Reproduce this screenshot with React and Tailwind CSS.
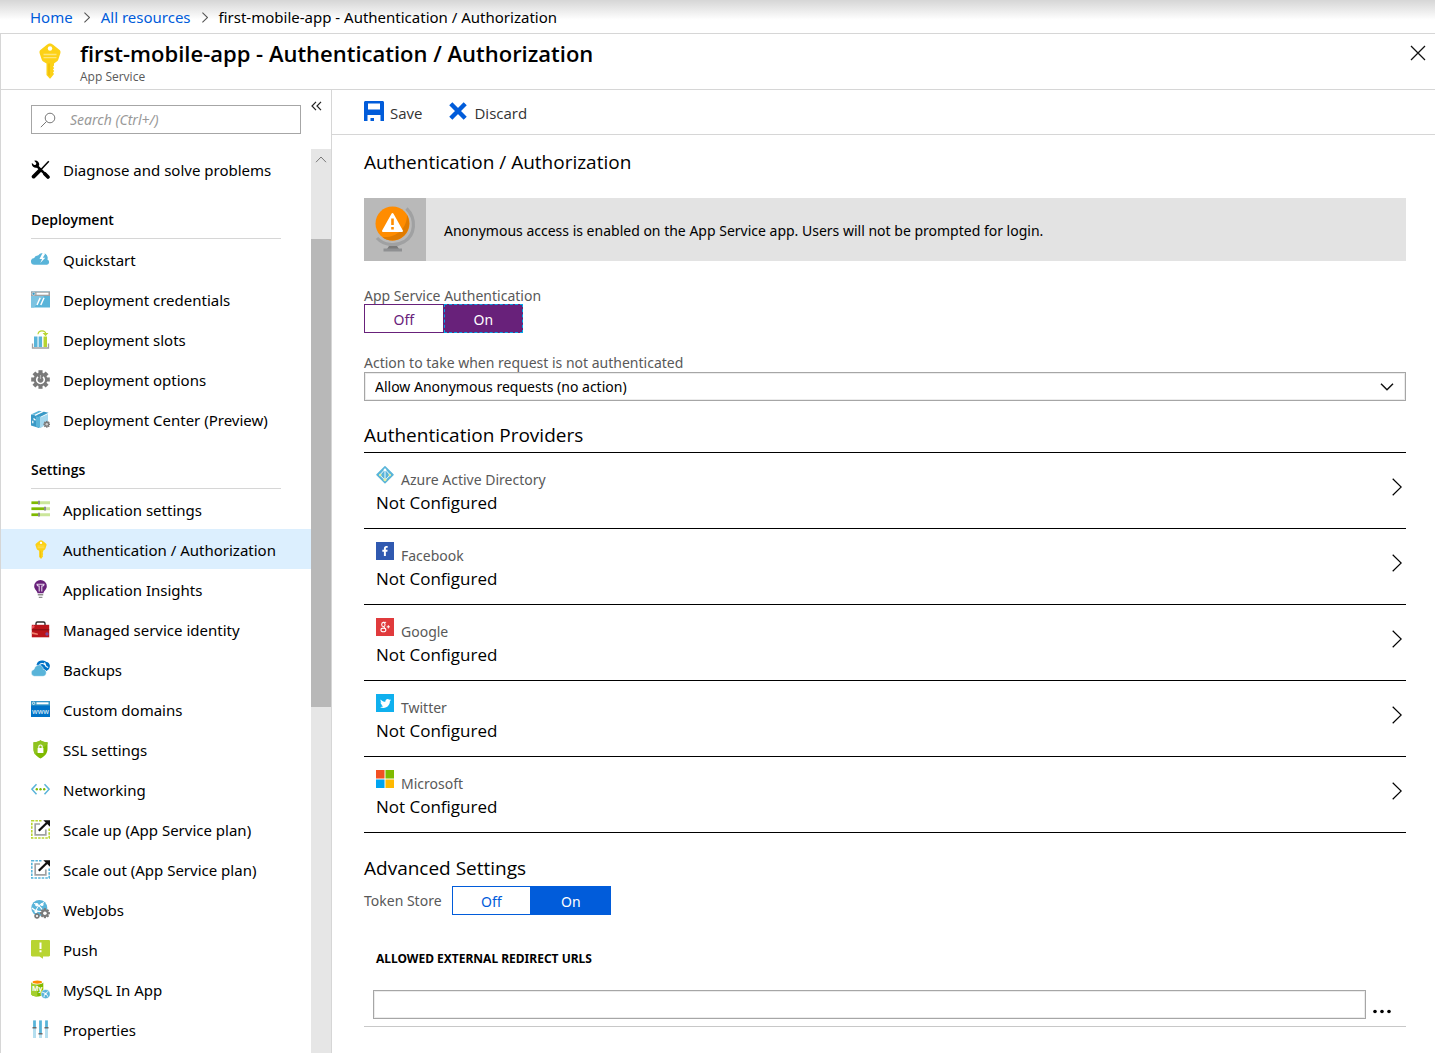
import React, { useState } from 'react';
import { FaFacebookF, FaTwitter } from 'react-icons/fa';

function Icon({ children, className = 'h-[19px] w-[19px]' }) {
  return (
    <svg viewBox="0 0 19 19" fill="none" aria-hidden="true" className={`shrink-0 ${className}`}>
      {children}
    </svg>
  );
}

// 8-tooth gear centred on cx, cy
function Gear({ cx, cy, r, fill, hole = '#fff' }) {
  return (
    <g transform={`translate(${cx} ${cy}) scale(${r / 10})`}>
      {[0, 45, 90, 135].map((a) => (
        <rect key={a} x="-2.2" y="-10" width="4.4" height="20" fill={fill} transform={`rotate(${a})`} />
      ))}
      <circle r="7.4" fill={fill} />
      <circle r="3.6" fill={hole} />
    </g>
  );
}

function KeyIcon({ className }) {
  return (
    <svg viewBox="0 0 22 36" fill="none" aria-hidden="true" className={className}>
      <path d="M11 .5c1.200 0 1.900.4 2.800 1.100l6.500 5.200c1.300 1.100 1.500 2.100 1 3.700l-1.900 5.700c-.5 1.500-1.200 2-2.400 2.800L15 20.500v2l-1 1.200 1.200 1.300-1.200 1.500 1.200 1.500-1.200 1.500 1 1.500-3.200 4c-.5.700-1.100.7-1.600 0L7.500 32V20.500L5 19c-1.200-.8-1.900-1.300-2.400-2.800L.7 10.500c-.5-1.600-.3-2.600 1-3.700l6.500-5.200C9.100.9 9.800.5 11 .5z" fill="#fcd116" />
      <circle cx="11" cy="5.500" r="2.200" fill="#fff" />
      <path d="M4.500 11.500h13M4.500 14.700h13" stroke="#fde67a" strokeWidth="1.300" />
      <path d="M10 20.500v12" stroke="#e8b400" strokeWidth="1" />
    </svg>
  );
}

function ToolsIcon() {
  return (
    <Icon>
      <path d="M4.800 4.800l9.900 9.900" stroke="#000" strokeWidth="2.600" />
      <path d="M14 14l3 3" stroke="#000" strokeWidth="3.600" strokeLinecap="round" />
      <path d="M3.200.8A3.800 3.800 0 0 1 8 5.600L5.900 7.700A4 4 0 0 1 .9 3.100l2.300 2 1.800-.3.3-1.800z" fill="#000" />
      <path d="M17.800 1.200l-7.500 8" stroke="#000" strokeWidth="1.500" />
      <path d="M8.600 10.600l-6 6" stroke="#000" strokeWidth="3.800" strokeLinecap="round" />
    </Icon>
  );
}

function CloudBoltIcon() {
  return (
    <Icon>
      <path d="M3.500 14.800a3.300 3.300 0 0 1-.3-6.800 3.600 3.600 0 0 1 3.900-2.500A5.200 5.200 0 0 1 16.600 7c.2 1 .1 1.800-.2 2.500a2.800 2.800 0 0 1-.4 5.300z" fill="#59b4d9" />
      <path d="M11.800 2.500L8.500 9h2.600L9.300 13l5-5.200h-2.500l2.400-4z" fill="#fff" />
    </Icon>
  );
}

function CredentialsIcon() {
  return (
    <Icon>
      <path d="M0 1.500h19v16H0z" fill="#59b4d9" />
      <path d="M0 6h13L3 17.500H0z" fill="#7cc3e1" />
      <path d="M0 1.500h19V6H0z" fill="#a0a1a2" />
      <path d="M5.500 2.700h12v2h-12z" fill="#fff" />
      <circle cx="2.600" cy="3.800" r="1.500" fill="#3999c6" stroke="#fff" strokeWidth=".5" />
      <path d="M9.200 7.800L6 15M13 7.800L9.800 15" stroke="#fff" strokeWidth="1.500" />
    </Icon>
  );
}

function SlotsIcon() {
  return (
    <Icon>
      <path d="M1.500 13.500v4.500h16v-4.500" stroke="#a0a1a2" strokeWidth="1.300" />
      <path d="M3 6.500h3.500V17H3zM7.600 6.500h3.500V17H7.600z" fill="#59b4d9" />
      <path d="M12.500 6.500H16V17h-3.500z" fill="#b8d432" />
      <path d="M7 4.200C7.300 1.800 9 .9 11 .9s3.600 1 3.800 3" stroke="#b8d432" strokeWidth="1.200" />
      <path d="M11.600 3h5.800l-2.800 3.200z" fill="#b8d432" />
    </Icon>
  );
}

function OptionsIcon() {
  return (
    <Icon>
      <Gear cx={9.5} cy={9.5} r={9.3} fill="#7a7a7a" hole="#7a7a7a" />
      <path d="M7 6.800a3.800 3.800 0 1 0 5 0" stroke="#fff" strokeWidth="1.600" />
      <path d="M9.500 5v4" stroke="#b5b5b5" strokeWidth="1.200" />
    </Icon>
  );
}

function CenterIcon() {
  return (
    <Icon>
      <path d="M0 4.500L8 6v12l-8-2.500z" fill="#3999c6" />
      <path d="M0 4.500L8 .8l3 .7L4.500 5z" fill="#59b4d9" />
      <path d="M4.500 5.200L12 1.500l5.500 1.300L9 7z" fill="#3999c6" />
      <path d="M5 6.500l4.500.5v11L5 16.500z" fill="#59b4d9" />
      <path d="M9.500 7.500l7.500-3.500v9.500l-7.500 4.500z" fill="#a4d8ef" />
      <path d="M4 5.200L12.500 1.200M2.500 8.500l2 1.800M1.800 10.800v2.500" stroke="#fff" strokeWidth="1.200" />
      <Gear cx={15.8} cy={14.3} r={3.4} fill="#7a7a7a" hole="#d0d0d0" />
    </Icon>
  );
}

function SlidersIcon() {
  return (
    <Icon>
      <path d="M.5 2.700h18.500M.5 8.700h18.500M.5 14.700h18.500" stroke="#cbe69a" strokeWidth="3" />
      <path d="M.5 2.700h6.500M.5 8.700h12.500M.5 14.700h6.500" stroke="#7fba00" strokeWidth="2.400" />
      <path d="M8 .8v3.800M14 6.800v3.800M8 12.800v3.800" stroke="#8d8d8d" strokeWidth="2" />
    </Icon>
  );
}

function InsightsIcon() {
  return (
    <Icon>
      <path d="M9.500 0a6.300 6.300 0 0 1 6.300 6.200c0 3.300-3 4.300-3.300 7h-6c-.3-2.700-3.300-3.700-3.300-7A6.300 6.300 0 0 1 9.500 0z" fill="#68217a" />
      <path d="M8.200 11.500V5.500M10.800 11.500V5.500M5.500 4.200h8M6 4.200c0 1.300.8 1.800 2.200 1.800M13 4.200c0 1.300-.8 1.800-2.200 1.800" stroke="#e6d6ec" strokeWidth="1.100" />
      <path d="M6.800 14.700h5.400M7.800 17.400h3.600" stroke="#8d8d8d" strokeWidth="1.400" />
    </Icon>
  );
}

function ToolboxIcon() {
  return (
    <Icon>
      <path d="M5 5V3.500C5 2.500 5.600 2 6.500 2h6c.9 0 1.500.5 1.500 1.500V5" stroke="#2b2b2b" strokeWidth="1.400" />
      <path d="M.8 4.800h17.400v12.500H.8z" fill="#ba141a" />
      <path d="M.8 9.300h17.400v1H.8z" fill="#7f0e13" />
      <path d="M.8 12l6 1.500V15l-6-1z" fill="#f0816d" />
      <path d="M.8 6l2-1 1 2-3 2z" fill="#e8525a" />
      <circle cx="16" cy="14" r="1.700" fill="#804998" />
    </Icon>
  );
}

function BackupsIcon() {
  return (
    <Icon>
      <path d="M5.500 5A5.500 5.500 0 0 1 12 .5a6 6 0 0 1 3.500 1.600c1.800.2 3 1.500 3.300 3.200.2 1.500-.3 3-1.300 4.200l-2 1.500-4-2z" fill="#0072c6" />
      <path d="M8.500 4.600c2.500-2 5.500-1 6.500 1.800l2.200 1.200M13.500 2.500l1.500 3.900" stroke="#fff" strokeWidth="1.100" />
      <path d="M3.400 16.300a3.500 3.500 0 0 1-.4-6.900C3.800 6.300 6 4.800 8.500 5.200c2.300.4 3.700 2 3.900 4.200.9-.3 2.900.9 2.900 3.400 0 2-1.500 3.500-3.300 3.500z" fill="#59b4d9" stroke="#fff" strokeWidth=".5" />
    </Icon>
  );
}

function DomainsIcon() {
  return (
    <Icon>
      <path d="M0 1.200h19v15.800H0z" fill="#0072c6" />
      <path d="M0 1.200h19v4.300H0z" fill="#3999c6" />
      <path d="M5.500 2.300h12v2h-12z" fill="#fff" />
      <circle cx="2.600" cy="3.300" r="1.200" stroke="#fff" strokeWidth=".7" />
      <text x="9.500" y="13.500" textAnchor="middle" fontSize="7" fontFamily="Open Sans, sans-serif" fontWeight="600" fill="#cfe5f5">www</text>
    </Icon>
  );
}

function SslIcon() {
  return (
    <Icon>
      <path d="M9.500.3c2 1.500 4.500 2 7 2V9c0 4.500-3 7.500-7 9.500-4-2-7-5-7-9.500V2.300c2.500 0 5-.5 7-2z" fill="#7fba00" />
      <path d="M9.500.3c2 1.500 4.500 2 7 2V4L4 14.500C3 13 2.500 11 2.500 9V2.300c2.500 0 5-.5 7-2z" fill="#8fc31f" />
      <path d="M6.600 8h5.800v5H6.600z" fill="#fff" />
      <path d="M7.800 8V6.700a1.700 1.700 0 0 1 3.400 0V8" stroke="#fff" strokeWidth="1.100" />
    </Icon>
  );
}

function NetworkIcon() {
  return (
    <Icon>
      <path d="M5.500 4.200L.9 9.200l4.600 5M13.500 4.200l4.600 5-4.600 5" stroke="#59b4d9" strokeWidth="1.500" />
      <circle cx="5.800" cy="9.200" r="1.200" fill="#7fba00" />
      <circle cx="9.500" cy="9.200" r="1.200" fill="#7fba00" />
      <circle cx="13.200" cy="9.200" r="1.200" fill="#7fba00" />
    </Icon>
  );
}

function ScaleIcon({ color }) {
  return (
    <Icon>
      <path d="M.8.800h17.400v17.200H.8z" stroke={color} strokeWidth="1.600" strokeDasharray="2.500 1.100" />
      <path d="M11 0h8v8h-8z" fill="#fff" />
      <path d="M9 4H4.200v10.800h10.600V9.500" stroke="#a0a1a2" strokeWidth="1.700" />
      <path d="M7.800 10.800l8.500-8.300" stroke="#111" strokeWidth="2.300" />
      <path d="M12.300.2H19v6.500z" fill="#111" />
    </Icon>
  );
}

function WebJobsIcon() {
  return (
    <Icon>
      <circle cx="8.300" cy="8" r="8" fill="#59b4d9" />
      <path d="M3 3.500c3 0 7 3 9 8M13 2.500C9 4 5 8 4.500 13M1 8c3 3 7 4 11 3.500" stroke="#fff" strokeWidth="1.200" />
      <circle cx="5.800" cy="4.800" r="1.700" fill="#fff" />
      <circle cx="11" cy="4.500" r="1.500" fill="#fff" />
      <circle cx="5" cy="11.500" r="1.500" fill="#fff" />
      <Gear cx={13.9} cy={13.2} r={5} fill="#7a7a7a" />
      <Gear cx={6} cy={16} r={3} fill="#7a7a7a" />
    </Icon>
  );
}

function PushIcon() {
  return (
    <Icon>
      <path d="M1.200 0h16.600c.7 0 1.200.5 1.200 1.200v14c0 .7-.5 1.200-1.200 1.200H12V18.800l-3.500-2.400H1.200C.5 16.400 0 15.900 0 15.200v-14C0 .5.5 0 1.200 0z" fill="#b8d432" />
      <path d="M9.500 2.500v6.500M9.500 10.300v2" stroke="#fff" strokeWidth="2" />
    </Icon>
  );
}

function MySqlIcon() {
  return (
    <Icon>
      <path d="M.3 2.500h12v11.700c0 1.200-2.700 2.200-6 2.200s-6-1-6-2.200z" fill="#7fba00" />
      <path d="M.3 2.500h6v13.900c-3.300 0-6-1-6-2.200z" fill="#a4cf2d" />
      <ellipse cx="6.300" cy="2.300" rx="6" ry="2.200" fill="#fff" />
      <ellipse cx="6.300" cy="2.100" rx="4.800" ry="1.600" fill="#ff8c00" />
      <text x="6.200" y="11" textAnchor="middle" fontSize="7" fontFamily="Open Sans, sans-serif" fontWeight="700" fill="#fff">My</text>
      <circle cx="14.600" cy="14.100" r="4.600" fill="#59b4d9" stroke="#fff" strokeWidth=".6" />
      <path d="M11.300 12.500c2.500 0 4.700 1.500 5.500 4.200M17.200 11.500c-2.500 1-4 3-4.200 5.700" stroke="#fff" strokeWidth=".9" />
      <circle cx="14.600" cy="13.800" r="1.100" fill="#fff" />
    </Icon>
  );
}

function PropertiesIcon() {
  return (
    <Icon>
      <path d="M3.500.5v17.500M9.500.5v17.500M15.500.5v17.500" stroke="#b5dff0" strokeWidth="3" />
      <path d="M3.500.5v7M9.500.5v13M15.500.5v7" stroke="#59b4d9" strokeWidth="2.600" />
      <path d="M1.500 7.700h4M7.500 13.700h4M13.500 7.700h4" stroke="#6b6b6b" strokeWidth="1.500" />
    </Icon>
  );
}

function ChevronRight({ className, strokeWidth = 1.2 }) {
  return (
    <svg viewBox="0 0 10 18" fill="none" stroke="currentColor" aria-hidden="true" className={className}>
      <path d="M.7.700L9.200 9 .7 17.300" strokeWidth={strokeWidth} />
    </svg>
  );
}

const NAV_GROUPS = [
  {
    items: [{ label: 'Diagnose and solve problems', icon: <ToolsIcon /> }],
  },
  {
    title: 'Deployment',
    items: [
      { label: 'Quickstart', icon: <CloudBoltIcon /> },
      { label: 'Deployment credentials', icon: <CredentialsIcon /> },
      { label: 'Deployment slots', icon: <SlotsIcon /> },
      { label: 'Deployment options', icon: <OptionsIcon /> },
      { label: 'Deployment Center (Preview)', icon: <CenterIcon /> },
    ],
  },
  {
    title: 'Settings',
    items: [
      { label: 'Application settings', icon: <SlidersIcon /> },
      {
        label: 'Authentication / Authorization',
        icon: (
          <span className="flex w-[19px] justify-center">
            <KeyIcon className="h-[19px] w-3" />
          </span>
        ),
        active: true,
      },
      { label: 'Application Insights', icon: <InsightsIcon /> },
      { label: 'Managed service identity', icon: <ToolboxIcon /> },
      { label: 'Backups', icon: <BackupsIcon /> },
      { label: 'Custom domains', icon: <DomainsIcon /> },
      { label: 'SSL settings', icon: <SslIcon /> },
      { label: 'Networking', icon: <NetworkIcon /> },
      { label: 'Scale up (App Service plan)', icon: <ScaleIcon color="#b8d432" /> },
      { label: 'Scale out (App Service plan)', icon: <ScaleIcon color="#59b4d9" /> },
      { label: 'WebJobs', icon: <WebJobsIcon /> },
      { label: 'Push', icon: <PushIcon /> },
      { label: 'MySQL In App', icon: <MySqlIcon /> },
      { label: 'Properties', icon: <PropertiesIcon /> },
    ],
  },
];

const PROVIDERS = [
  {
    name: 'Azure Active Directory',
    icon: (
      <Icon className="h-[18px] w-[18px]">
        <path d="M9.500.8l8.500 8.500-8.500 8.500L1 9.300z" fill="#59b4d9" stroke="#59b4d9" strokeWidth="1.500" strokeLinejoin="round" />
        <path d="M9.500 3.500v11.500M9.500 3.500L4 9.500l5.500 5.500L15 9.500z" stroke="#fff" strokeWidth="1" />
        <circle cx="9.500" cy="4" r="1.400" fill="#fff" />
        <circle cx="4.500" cy="9.500" r="1.300" fill="#e8f0a0" />
        <circle cx="14.500" cy="9.500" r="1.300" fill="#e8f0a0" />
        <circle cx="9.500" cy="14.500" r="1.600" fill="#e8f0a0" />
      </Icon>
    ),
  },
  {
    name: 'Facebook',
    icon: (
      <span className="flex h-[18px] w-[18px] items-center justify-center bg-[#3059b0] text-white">
        <FaFacebookF className="h-[10px] w-[10px]" />
      </span>
    ),
  },
  {
    name: 'Google',
    icon: (
      <Icon className="h-[18px] w-[18px]">
        <path d="M0 0h19v19H0z" fill="#e03a3c" />
        <ellipse cx="7.800" cy="6.800" rx="1.800" ry="2.200" stroke="#fff" strokeWidth="1.100" />
        <ellipse cx="7.800" cy="12.600" rx="2.600" ry="1.900" stroke="#fff" strokeWidth="1.100" />
        <path d="M7.500 4.600h3.200M8.300 9l1 1.800M11.300 9.300h3.400M13 7.600V11" stroke="#fff" strokeWidth="1" />
      </Icon>
    ),
  },
  {
    name: 'Twitter',
    icon: (
      <span className="flex h-[18px] w-[18px] items-center justify-center bg-[#0fb0ee] text-white">
        <FaTwitter className="h-[11px] w-[11px]" />
      </span>
    ),
  },
  {
    name: 'Microsoft',
    icon: (
      <Icon className="h-[18px] w-[18px]">
        <path d="M0 0h9v9H0z" fill="#f25022" />
        <path d="M10 0h9v9h-9z" fill="#7fba00" />
        <path d="M0 10h9v9H0z" fill="#00a4ef" />
        <path d="M10 10h9v9h-9z" fill="#ffb900" />
      </Icon>
    ),
  },
];

const TOGGLE_THEMES = {
  purple: {
    off: 'border-[#68217a] text-[#68217a]',
    on: 'border-dashed border-[#00a8e8] bg-[#68217a] text-white',
  },
  blue: {
    off: 'border-[#015cda] text-[#015cda]',
    on: 'border-[#015cda] bg-[#015cda] text-white',
  },
};

function Toggle({ name, label, theme }) {
  const [value, setValue] = useState('On');
  const colors = TOGGLE_THEMES[theme];

  return (
    <div role="radiogroup" aria-label={label} className="flex w-[159px]">
      {['Off', 'On'].map((option) => (
        <label
          key={option}
          className={`relative flex h-[29px] flex-1 cursor-pointer items-center justify-center border pt-0.5 text-sm ${
            value === option ? colors.on : colors.off
          }`}
        >
          <input
            type="radio"
            name={name}
            className="sr-only"
            checked={value === option}
            onChange={() => setValue(option)}
          />
          {option}
        </label>
      ))}
    </div>
  );
}

function Breadcrumb() {
  return (
    <nav
      aria-label="Breadcrumb"
      className="flex h-[34px] items-center gap-2 border-b border-[#d6d6d6] bg-linear-to-b from-[#d6d6d6] to-white to-60% pt-px pl-[30px] text-[15px]"
    >
      <a href="#home" className="text-[#015cda]">Home</a>
      <ChevronRight className="mx-[3px] h-[11px] w-[6px] text-[#555]" strokeWidth={1.8} />
      <a href="#resources" className="text-[#015cda]">All resources</a>
      <ChevronRight className="mx-[3px] h-[11px] w-[6px] text-[#555]" strokeWidth={1.8} />
      <span>first-mobile-app - Authentication / Authorization</span>
    </nav>
  );
}

function Header() {
  return (
    <header className="flex h-14 items-start border-b border-[#d6d6d6] pr-[9px] pl-[38px]">
      <KeyIcon className="mt-[9px] h-9 w-[22px] shrink-0" />
      <div className="ml-[19px] flex-1">
        <h1 className="mt-[3px] mb-px font-['Open_Sans',sans-serif] text-[22px] leading-8 font-semibold">
          first-mobile-app - Authentication / Authorization
        </h1>
        <p className="font-['Open_Sans',sans-serif] text-xs leading-[14px] text-[#595959]">App Service</p>
      </div>
      <button type="button" aria-label="Close" className="mt-[11px]">
        <svg viewBox="0 0 16 16" fill="none" stroke="#111" aria-hidden="true" className="h-4 w-4">
          <path d="M1 1l14 14M15 1L1 15" strokeWidth="1.300" />
        </svg>
      </button>
    </header>
  );
}

function Sidebar() {
  return (
    <aside className="flex w-[331px] shrink-0 flex-col border-r border-[#d6d6d6]">
      <div className="flex h-[59px] items-start pt-[11px] pl-[30px]">
        <label className="mt-1 flex h-[29px] w-[270px] items-center border border-[#a6a6a6] px-2">
          <svg viewBox="0 0 16 16" fill="none" stroke="#777" aria-hidden="true" className="h-4 w-4 shrink-0">
            <circle cx="10" cy="6" r="4.800" />
            <path d="M6.600 9.400L.8 15.200" />
          </svg>
          <input
            type="text"
            aria-label="Search"
            placeholder="Search (Ctrl+/)"
            className="ml-[14px] w-full min-w-0 text-sm italic outline-none placeholder:text-[#999]"
          />
        </label>
        <button type="button" aria-label="Collapse menu" className="ml-[10px]">
          <svg viewBox="0 0 11 10" fill="none" stroke="#222" aria-hidden="true" className="h-[10px] w-[11px]">
            <path d="M5 .8L1 5l4 4.200M10 .8L6 5l4 4.200" strokeWidth="1.200" />
          </svg>
        </button>
      </div>
      <div className="flex flex-1">
        <nav aria-label="Resource menu" className="flex-1">
          {NAV_GROUPS.map((group) => (
            <section key={group.title || 'general'}>
              {group.title && (
                <h2 className="mx-[30px] flex h-[50px] items-end border-b border-[#d6d6d6] pb-2 font-['Open_Sans',sans-serif] text-sm font-semibold">
                  {group.title}
                </h2>
              )}
              <ul>
                {group.items.map((item) => (
                  <li key={item.label}>
                    <a
                      href="#menu"
                      aria-current={item.active ? 'page' : undefined}
                      className={`flex h-10 items-center gap-[13px] pl-[30px] text-[15px] whitespace-nowrap ${
                        item.active ? 'bg-[#dceffe]' : ''
                      }`}
                    >
                      {item.icon}
                      <span className="pt-0.5">{item.label}</span>
                    </a>
                  </li>
                ))}
              </ul>
            </section>
          ))}
        </nav>
        <div aria-hidden="true" className="w-5 bg-[#e6e6e6]">
          <div className="flex h-[90px] justify-center pt-[7px]">
            <svg viewBox="0 0 12 7" fill="none" stroke="#777" className="h-[7px] w-3">
              <path d="M1 6.200L6 1l5 5.200" />
            </svg>
          </div>
          <div className="h-[468px] bg-[#b8b8b8]" />
        </div>
      </div>
    </aside>
  );
}

function Toolbar() {
  return (
    <div className="flex h-[45px] items-center border-b border-[#d6d6d6] pt-0.5 pl-8 font-['Open_Sans',sans-serif] text-[15px] text-[#333]">
      <button type="button" className="flex items-center gap-[6px]">
        <svg viewBox="0 0 20 20" fill="none" aria-hidden="true" className="mb-1 h-5 w-5">
          <path d="M1.500 0H18.500c.9 0 1.500.6 1.500 1.500V20h-3.500v-6h-13v6H0V1.500C0 .6.600 0 1.500 0z" fill="#015cda" />
          <path d="M4 2.500h12v6H4z" fill="#fff" />
          <path d="M6.500 17h3.500V20H6.500z" fill="#015cda" />
        </svg>
        Save
      </button>
      <button type="button" className="ml-[27px] flex items-center gap-[7px]">
        <svg viewBox="0 0 18 18" fill="none" aria-hidden="true" className="mb-1 h-[18px] w-[18px]">
          <path d="M1.800 1.800l14.400 14.400M16.200 1.800L1.800 16.200" stroke="#015cda" strokeWidth="4.400" />
        </svg>
        Discard
      </button>
    </div>
  );
}

function Notice() {
  return (
    <div role="status" className="flex h-[63px] items-center bg-[#e3e3e3]">
      <div className="flex h-full w-[62px] shrink-0 items-center justify-center bg-[#b9b9b9]">
        <svg viewBox="0 0 42 48" fill="none" aria-hidden="true" className="mb-0.5 h-12 w-[42px]">
          <path d="M32.500 3.500C43 14 41 30 30.500 36.500 21 42 9.500 40 3 33" stroke="#a0a1a2" strokeWidth="3.200" />
          <path d="M15 41h8l2 3h-12z" fill="#7a7a7a" />
          <path d="M9.500 43.500h18.500v3H9.500z" fill="#8f9092" />
          <circle cx="18.500" cy="18.500" r="17" fill="#ff8c00" />
          <path d="M33 10c6 11-1 25-14.500 25.500-5 0-8-1.500-10-3.500C22 33 33 24 33 10z" fill="#e07b00" />
          <path d="M18.500 9l9.500 17H9z" fill="#fff" stroke="#fff" strokeWidth="2" strokeLinejoin="round" />
          <path d="M18.500 13.500V20M18.500 22v2.600" stroke="#ff8c00" strokeWidth="2.600" />
        </svg>
      </div>
      <p className="pt-0.5 pl-[18px] text-sm">
        Anonymous access is enabled on the App Service app. Users will not be prompted for login.
      </p>
    </div>
  );
}

function SectionTitle({ children, className }) {
  return <h2 className={`font-['Open_Sans',sans-serif] text-[19px] leading-7 ${className}`}>{children}</h2>;
}

function ProviderList() {
  return (
    <ul className="border-t border-black">
      {PROVIDERS.map((provider) => (
        <li key={provider.name} className="border-b border-black">
          <button type="button" className="flex h-[75px] w-full items-center pr-1 pl-3 text-left">
            <span className="flex-1">
              <span className="flex items-start gap-[7px] text-sm text-[#595959]">
                {provider.icon}
                <span className="pt-1">{provider.name}</span>
              </span>
              <span className="mt-px block font-['Open_Sans',sans-serif] text-[17px] leading-6">
                Not Configured
              </span>
            </span>
            <ChevronRight className="mb-2 h-[18px] w-[10px]" />
          </button>
        </li>
      ))}
    </ul>
  );
}

function Content() {
  return (
    <main className="min-w-0 flex-1">
      <Toolbar />
      <div className="pr-[29px] pl-8">
        <SectionTitle className="mt-[13px] mb-[22px]">Authentication / Authorization</SectionTitle>
        <Notice />

        <div className="mt-[26px] text-sm leading-[17px] text-[#595959]">App Service Authentication</div>
        <Toggle name="app-service-auth" label="App Service Authentication" theme="purple" />

        <label htmlFor="unauth-action" className="mt-[21px] block text-sm leading-[18px] text-[#595959]">
          Action to take when request is not authenticated
        </label>
        <div className="relative">
          <select
            id="unauth-action"
            className="block h-[29px] w-full appearance-none border border-[#a6a6a6] bg-white px-[10px] text-sm shadow-[inset_0_0_0_1px_#ececec]"
          >
            <option>Allow Anonymous requests (no action)</option>
          </select>
          <svg
            viewBox="0 0 14 8"
            fill="none"
            stroke="#111"
            aria-hidden="true"
            className="pointer-events-none absolute top-[11px] right-3 h-2 w-[14px]"
          >
            <path d="M1 .8l6 6 6-6" strokeWidth="1.500" />
          </svg>
        </div>

        <SectionTitle className="mt-5 mb-[3px]">Authentication Providers</SectionTitle>
        <ProviderList />

        <SectionTitle className="mt-[21px] mb-1">Advanced Settings</SectionTitle>
        <div className="flex items-center gap-[10px]">
          <span className="text-sm text-[#595959]">Token Store</span>
          <Toggle name="token-store" label="Token Store" theme="blue" />
        </div>

        <div className="border-b border-[#c8c8c8] pb-[7px]">
          <label htmlFor="redirect-url" className="mt-[34px] mb-[21px] block pl-3 text-xs leading-5 font-bold">
            ALLOWED EXTERNAL REDIRECT URLS
          </label>
          <div className="flex items-end pr-[14px] pl-[9px]">
            <input
              id="redirect-url"
              type="text"
              className="h-[29px] min-w-0 flex-1 border border-[#a6a6a6] px-2 text-sm shadow-[inset_0_0_0_1px_#ececec]"
            />
            <button type="button" aria-label="More options" className="ml-[7px] pb-[5px]">
              <svg viewBox="0 0 19 5" aria-hidden="true" className="h-[5px] w-[19px]">
                <circle cx="2" cy="2.500" r="1.800" />
                <circle cx="9" cy="2.500" r="1.800" />
                <circle cx="16" cy="2.500" r="1.800" />
              </svg>
            </button>
          </div>
        </div>
      </div>
    </main>
  );
}

export default function App() {
  return (
    <div className="flex min-h-screen flex-col bg-white font-['Noto_Sans','Open_Sans',sans-serif] text-black">
      <Breadcrumb />
      <div className="flex flex-1 flex-col border-l border-[#d6d6d6]">
        <Header />
        <div className="flex flex-1">
          <Sidebar />
          <Content />
        </div>
      </div>
    </div>
  );
}
